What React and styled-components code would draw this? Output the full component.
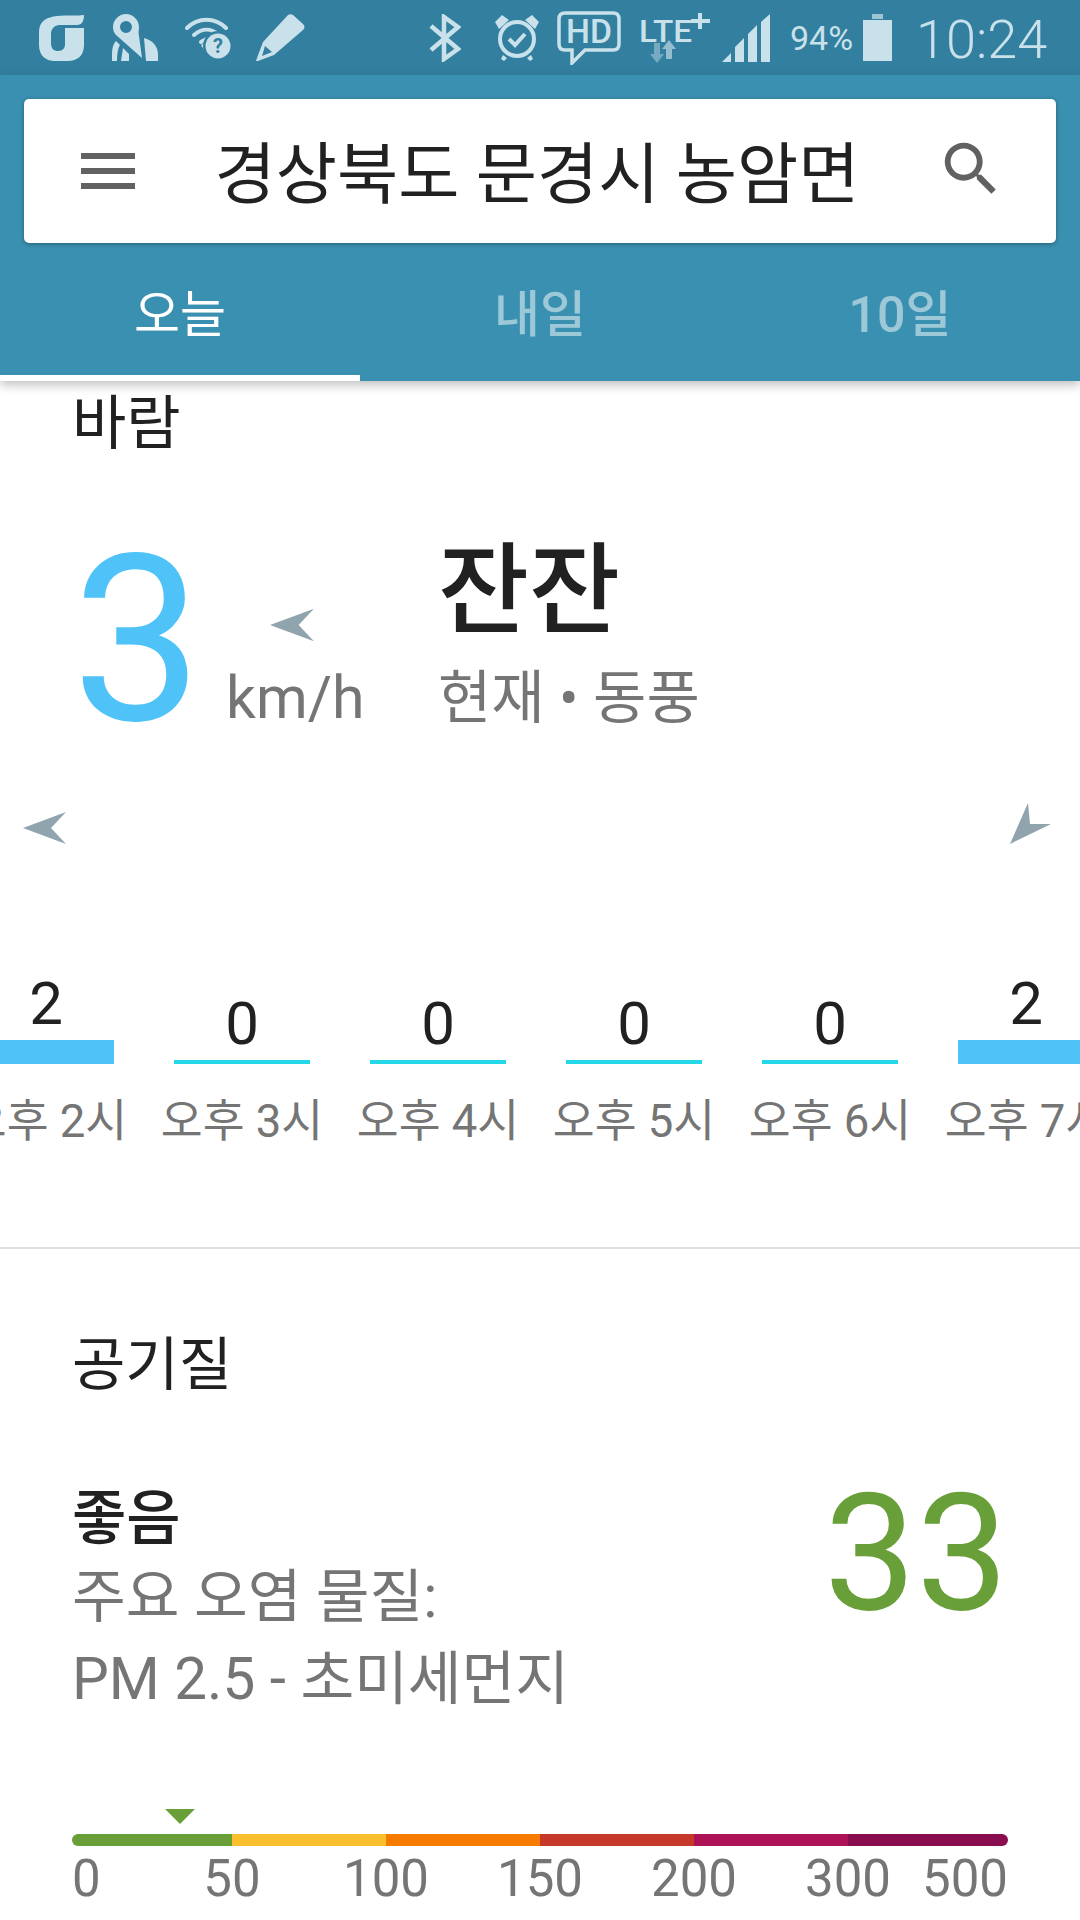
import React from "react";
import styled, { createGlobalStyle } from "styled-components";

const hours = [
  { label: "오후 2시", value: 2 },
  { label: "오후 3시", value: 0 },
  { label: "오후 4시", value: 0 },
  { label: "오후 5시", value: 0 },
  { label: "오후 6시", value: 0 },
  { label: "오후 7시", value: 2 },
];

const segments = [
  { color: "#689f38", width: 160 },
  { color: "#fbc02d", width: 154 },
  { color: "#f57c00", width: 154 },
  { color: "#c53929", width: 154 },
  { color: "#ad1457", width: 154 },
  { color: "#880e4f", width: 160 },
];

const ticks = [
  { label: "0", left: 0 },
  { label: "50", left: 160 },
  { label: "100", left: 314 },
  { label: "150", left: 468 },
  { label: "200", left: 622 },
  { label: "300", left: 776 },
  { label: "500", left: 893 },
];

const App = () => {
  return (
    <Screen>
      <GlobalStyle />
      <StatusBar>
        <StatusIcon $left={39} width="45" height="46" viewBox="0 0 45 46">
          <path d="M45 0C45 6 43 10 38 10H21C15 10 12 14 12 19V28C12 34 15 36 19 36C24 36 26 33 26 29V13H45V30C45 41 38 46 29 46H16C6 46 0 40 0 30V17C0 6 8 2 18 1C28 0 38 1 45 0Z" />
        </StatusIcon>
        <StatusIcon $left={28} width="46" height="48" viewBox="0 0 46 48">
          <path fillRule="evenodd" d="M14 0C21 0 27 6 27 13C27 16 26 18 27 22L30 44L4 21C2 19 1 16 1 13C1 6 7 0 14 0ZM14 7a6 6 0 1 0 0 12a6 6 0 1 0 0-12Z" />
          <path d="M32 24C40 26 46 32 46 40V47H34ZM4 27L8 31C6 34 5 40 5 47H0V40C0 35 1 30 4 27ZM11 34L17 40V47H9Z" />
        </StatusIcon>
        <StatusIcon $left={27} width="46" height="42" viewBox="0 0 46 42">
          <g fill="none" stroke="#c9e1ea" strokeWidth="4" strokeLinecap="round">
            <path d="M2 11C13 0 30 0 41 11" />
            <path d="M9 18c8-7 17-7 25 0" />
            <path d="M16 25c2-2 4-2 6-3" />
          </g>
          <path d="M19 33l-3-5 4-2z" />
          <circle cx="33" cy="29" r="15" fill="#337f9f" />
          <circle cx="33" cy="29" r="12.5" />
          <text x="33" y="36" textAnchor="middle" fontSize="20" fontWeight="700" fontFamily="Roboto" fill="#337f9f">?</text>
        </StatusIcon>
        <StatusIcon $left={25} width="50" height="48" viewBox="0 0 50 48">
          <path fillRule="evenodd" d="M32 1c2-1 3-1 5 0l10 9c2 2 2 4 0 6L18 41 2 47H0l1-3 6-16zM9 32L6 42l10-4z" />
        </StatusIcon>
        <StatusIcon $left={123} width="32" height="48" viewBox="0 0 32 48">
          <path d="M2 12l27 23-14 10V3l14 10L2 36" fill="none" stroke="#c9e1ea" strokeWidth="4.5" />
        </StatusIcon>
        <StatusIcon $left={33} width="46" height="48" viewBox="0 0 46 48">
          <circle cx="23" cy="25" r="17" fill="none" stroke="#c9e1ea" strokeWidth="4" />
          <path d="M15 25l6 6 10-11" fill="none" stroke="#c9e1ea" strokeWidth="4" />
          <path d="M1 8l7-7 7 5-10 9zM45 8l-7-7-7 5 10 9zM9 41l4 3-3 3-3-2zM37 41l-4 3 3 3 3-2z" />
        </StatusIcon>
        <StatusIcon $left={17} width="64" height="54" viewBox="0 0 64 54">
          <path d="M8 2h48c4 0 6 2 6 6v25c0 4-2 6-6 6H28L15 52V39H8c-4 0-6-2-6-6V8c0-4 2-6 6-6z" fill="none" stroke="#c9e1ea" strokeWidth="3.5" />
          <text x="32" y="32" textAnchor="middle" fontSize="34" fontFamily="Roboto" fontWeight="500" textLength="46" lengthAdjust="spacingAndGlyphs">HD</text>
        </StatusIcon>
        <StatusIcon $left={18} width="71" height="50" viewBox="0 0 71 50">
          <text x="0" y="29" fontSize="32" fontFamily="Roboto" fontWeight="500" textLength="53" lengthAdjust="spacingAndGlyphs">LTE</text>
          <path d="M59 0h4v6h8v4h-8v6h-4v-6h-7V6h7z" />
          <path d="M15 30h6v11h4l-7 9-7-9h4z" opacity="0.45" />
          <path d="M27 46h6V36h4l-7-9-7 9h4z" opacity="0.65" />
        </StatusIcon>
        <StatusIcon $left={12} width="48" height="48" viewBox="0 0 48 48">
          <path d="M0 48l9-9v9zM13 48V33l9-9v24zM26 48V20l9-9v37zM39 48V8l9-8v48z" />
        </StatusIcon>
        <StatusPercent>94%</StatusPercent>
        <StatusIcon $left={9} width="29" height="47" viewBox="0 0 29 47">
          <path d="M9 0h11v5H9z" opacity="0.7" />
          <path d="M0 6h29v41H0z" />
        </StatusIcon>
        <StatusClock>10:24</StatusClock>
      </StatusBar>

      <AppBar>
        <SearchCard>
          <svg width="54" height="36" viewBox="0 0 54 36">
            <path d="M0 0h54v6H0zM0 15h54v6H0zM0 30h54v6H0z" fill="#616161" />
          </svg>
          <CardTitle>경상북도 문경시 농암면</CardTitle>
          <SearchIcon width="70" height="70" viewBox="0 0 24 24">
            <path
              fill="#616161"
              d="M15.5 14h-.79l-.28-.27A6.471 6.471 0 0 0 16 9.5 6.5 6.5 0 1 0 9.5 16c1.61 0 3.09-.59 4.23-1.57l.27.28v.79l5 4.99L20.49 19l-4.99-5zm-6 0C7.01 14 5 11.99 5 9.5S7.01 5 9.5 5 14 7.01 14 9.5 11.99 14 9.5 14z"
            />
          </SearchIcon>
        </SearchCard>
        <Tabs>
          <Tab $active>오늘</Tab>
          <Tab>내일</Tab>
          <Tab>10일</Tab>
        </Tabs>
      </AppBar>

      <WindSection>
        <SectionTitle>바람</SectionTitle>
        <WindNow>
          <BigSpeed>3</BigSpeed>
          <UnitColumn>
            <HeadingLeft width="47" height="34" viewBox="0 0 46 32">
              <path d="M0 16L43 0 28 16 43 32z" fill="#90a4ae" />
            </HeadingLeft>
            <Unit>km/h</Unit>
          </UnitColumn>
          <Summary>
            <SummaryTitle>잔잔</SummaryTitle>
            <SummarySub>현재 • 동풍</SummarySub>
          </Summary>
        </WindNow>
        <ArrowRow>
          <svg width="46" height="34" viewBox="0 0 46 32">
            <path d="M0 16L43 0 28 16 43 32z" fill="#90a4ae" />
          </svg>
          <svg width="42" height="42" viewBox="0 0 42 42">
            <path d="M18 0l2 21h21L0 41z" fill="#90a4ae" />
          </svg>
        </ArrowRow>
        <HourRow>
          {hours.map((hour) => (
            <HourColumn key={hour.label}>
              <HourStack>
                <HourValue>{hour.value}</HourValue>
                <HourBar $value={hour.value} />
              </HourStack>
              <HourLabel>{hour.label}</HourLabel>
            </HourColumn>
          ))}
        </HourRow>
      </WindSection>

      <AirSection>
        <AirTitle>공기질</AirTitle>
        <AirSummary>
          <AirText>
            <AirGrade>좋음</AirGrade>
            <AirLine>주요 오염 물질:</AirLine>
            <AirLine>PM 2.5 - 초미세먼지</AirLine>
          </AirText>
          <AirIndex>33</AirIndex>
        </AirSummary>
        <Scale>
          <Marker />
          <ScaleBar>
            {segments.map((segment) => (
              <ScaleSegment key={segment.color} $color={segment.color} $width={segment.width} />
            ))}
          </ScaleBar>
          <ScaleTicks>
            {ticks.map((tick) => (
              <ScaleTick key={tick.label} $left={tick.left} $first={tick.label === "0"}>
                {tick.label}
              </ScaleTick>
            ))}
          </ScaleTicks>
        </Scale>
      </AirSection>
    </Screen>
  );
};

export default App;

const GlobalStyle = createGlobalStyle`
  html, body {
    margin: 0;
    padding: 0;
    background: #ffffff;
  }
  * {
    box-sizing: border-box;
  }
`;

const Screen = styled.div`
  width: 1080px;
  height: 1920px;
  overflow: hidden;
  background: #ffffff;
  font-family: Roboto, "Noto Sans CJK KR", sans-serif;
`;

const StatusBar = styled.div`
  display: flex;
  align-items: center;
  height: 75px;
  background: #337f9f;
  color: #c9e1ea;
`;

const StatusIcon = styled.svg`
  flex: none;
  margin-left: ${(p) => p.$left}px;
  fill: #c9e1ea;
`;

const StatusPercent = styled.span`
  margin-left: 20px;
  font-size: 34px;
  width: 64px;
  white-space: nowrap;
`;

const StatusClock = styled.span`
  margin: 3px 0 0 24px;
  font-size: 54px;
  font-weight: 300;
  white-space: nowrap;
`;

const AppBar = styled.div`
  position: relative;
  z-index: 1;
  height: 306px;
  padding-top: 24px;
  background: #3a90b0;
  box-shadow: 0 4px 10px rgba(0, 0, 0, 0.25);
`;

const SearchCard = styled.div`
  display: flex;
  align-items: center;
  height: 144px;
  margin: 0 24px;
  padding: 0 50px 0 57px;
  background: #ffffff;
  border-radius: 5px;
  box-shadow: 0 1px 4px rgba(0, 0, 0, 0.35);
`;

const CardTitle = styled.div`
  flex: 1;
  padding: 0 0 5px 3px;
  text-align: center;
  font-size: 66.5px;
  color: #212121;
  white-space: nowrap;
`;

const SearchIcon = styled.svg`
  margin-bottom: 4px;
`;

const Tabs = styled.div`
  display: flex;
  height: 138px;
`;

const Tab = styled.div`
  flex: 1;
  padding-top: 44px;
  text-align: center;
  font-size: 50px;
  line-height: 56px;
  font-weight: ${(p) => (p.$active ? 400 : 500)};
  color: ${(p) => (p.$active ? "#ffffff" : "rgba(255, 255, 255, 0.5)")};
  border-bottom: 6px solid ${(p) => (p.$active ? "#ffffff" : "transparent")};
`;

const WindSection = styled.div`
  height: 868px;
  border-bottom: 2px solid #e0e0e0;
  overflow: hidden;
`;

const SectionTitle = styled.div`
  padding: 10px 0 0 72px;
  font-size: 59px;
  line-height: 66px;
  color: #212121;
`;

const WindNow = styled.div`
  display: flex;
  height: 260px;
  padding-left: 72px;
  margin-top: 54px;
`;

const BigSpeed = styled.div`
  width: 154px;
  font-size: 232px;
  line-height: 260px;
  color: #4fc3f7;
`;

const UnitColumn = styled.div`
  width: 212px;
  padding-top: 97px;
`;

const HeadingLeft = styled.svg`
  display: block;
  margin-left: 44px;
`;

const Unit = styled.div`
  margin-top: 22px;
  font-size: 59px;
  line-height: 68px;
  color: #757575;
`;

const Summary = styled.div`
  padding-top: 15px;
`;

const SummaryTitle = styled.div`
  font-size: 99px;
  line-height: 130px;
  font-weight: 500;
  color: #212121;
`;

const SummarySub = styled.div`
  margin-top: 7px;
  font-size: 58px;
  line-height: 70px;
  color: #757575;
`;

const ArrowRow = styled.div`
  display: flex;
  align-items: flex-end;
  justify-content: space-between;
  height: 64px;
  margin-top: 10px;
  padding: 0 28px 0 23px;
`;

const HourRow = styled.div`
  display: flex;
  margin: 119px 0 0 -52px;
`;

const HourColumn = styled.div`
  display: flex;
  flex: none;
  flex-direction: column;
  align-items: center;
  width: 196px;
`;

const HourStack = styled.div`
  display: flex;
  flex-direction: column;
  align-items: center;
  justify-content: flex-end;
  height: 100px;
`;

const HourValue = styled.div`
  font-size: 60px;
  line-height: 72px;
  color: #212121;
`;

const HourBar = styled.div`
  width: 136px;
  height: ${(p) => (p.$value > 0 ? 24 : 4)}px;
  background: ${(p) => (p.$value > 0 ? "#4fc3f7" : "#26d7e8")};
`;

const HourLabel = styled.div`
  margin-top: 31px;
  font-size: 45.5px;
  line-height: 54px;
  color: #757575;
  white-space: nowrap;
`;

const AirSection = styled.div`
  padding: 0 72px;
`;

const AirTitle = styled.div`
  padding-top: 82px;
  font-size: 58px;
  line-height: 68px;
  color: #212121;
`;

const AirSummary = styled.div`
  display: flex;
  justify-content: space-between;
  margin-top: 83px;
`;

const AirText = styled.div`
  display: flex;
  flex-direction: column;
`;

const AirGrade = styled.div`
  font-size: 59px;
  line-height: 74px;
  font-weight: 500;
  color: #212121;
`;

const AirLine = styled.div`
  font-size: 58.4px;
  line-height: 82px;
  color: #757575;
`;

const AirIndex = styled.div`
  width: 250px;
  height: 170px;
  margin: -14px -66px 0 0;
  font-size: 164px;
  line-height: 170px;
  color: #689f38;
`;

const Scale = styled.div`
  position: relative;
  margin-top: 89px;
`;

const Marker = styled.div`
  width: 0;
  height: 0;
  margin: 0 0 10px 93px;
  border-left: 15px solid transparent;
  border-right: 15px solid transparent;
  border-top: 15px solid #689f38;
`;

const ScaleBar = styled.div`
  display: flex;
  width: 936px;
  height: 12px;
  border-radius: 6px;
  overflow: hidden;
`;

const ScaleSegment = styled.div`
  width: ${(p) => p.$width}px;
  background: ${(p) => p.$color};
`;

const ScaleTicks = styled.div`
  position: relative;
  height: 60px;
  margin-top: 3px;
`;

const ScaleTick = styled.span`
  position: absolute;
  left: ${(p) => p.$left}px;
  transform: ${(p) => (p.$first ? "none" : "translateX(-50%)")};
  font-size: 51px;
  line-height: 60px;
  color: #757575;
`;
